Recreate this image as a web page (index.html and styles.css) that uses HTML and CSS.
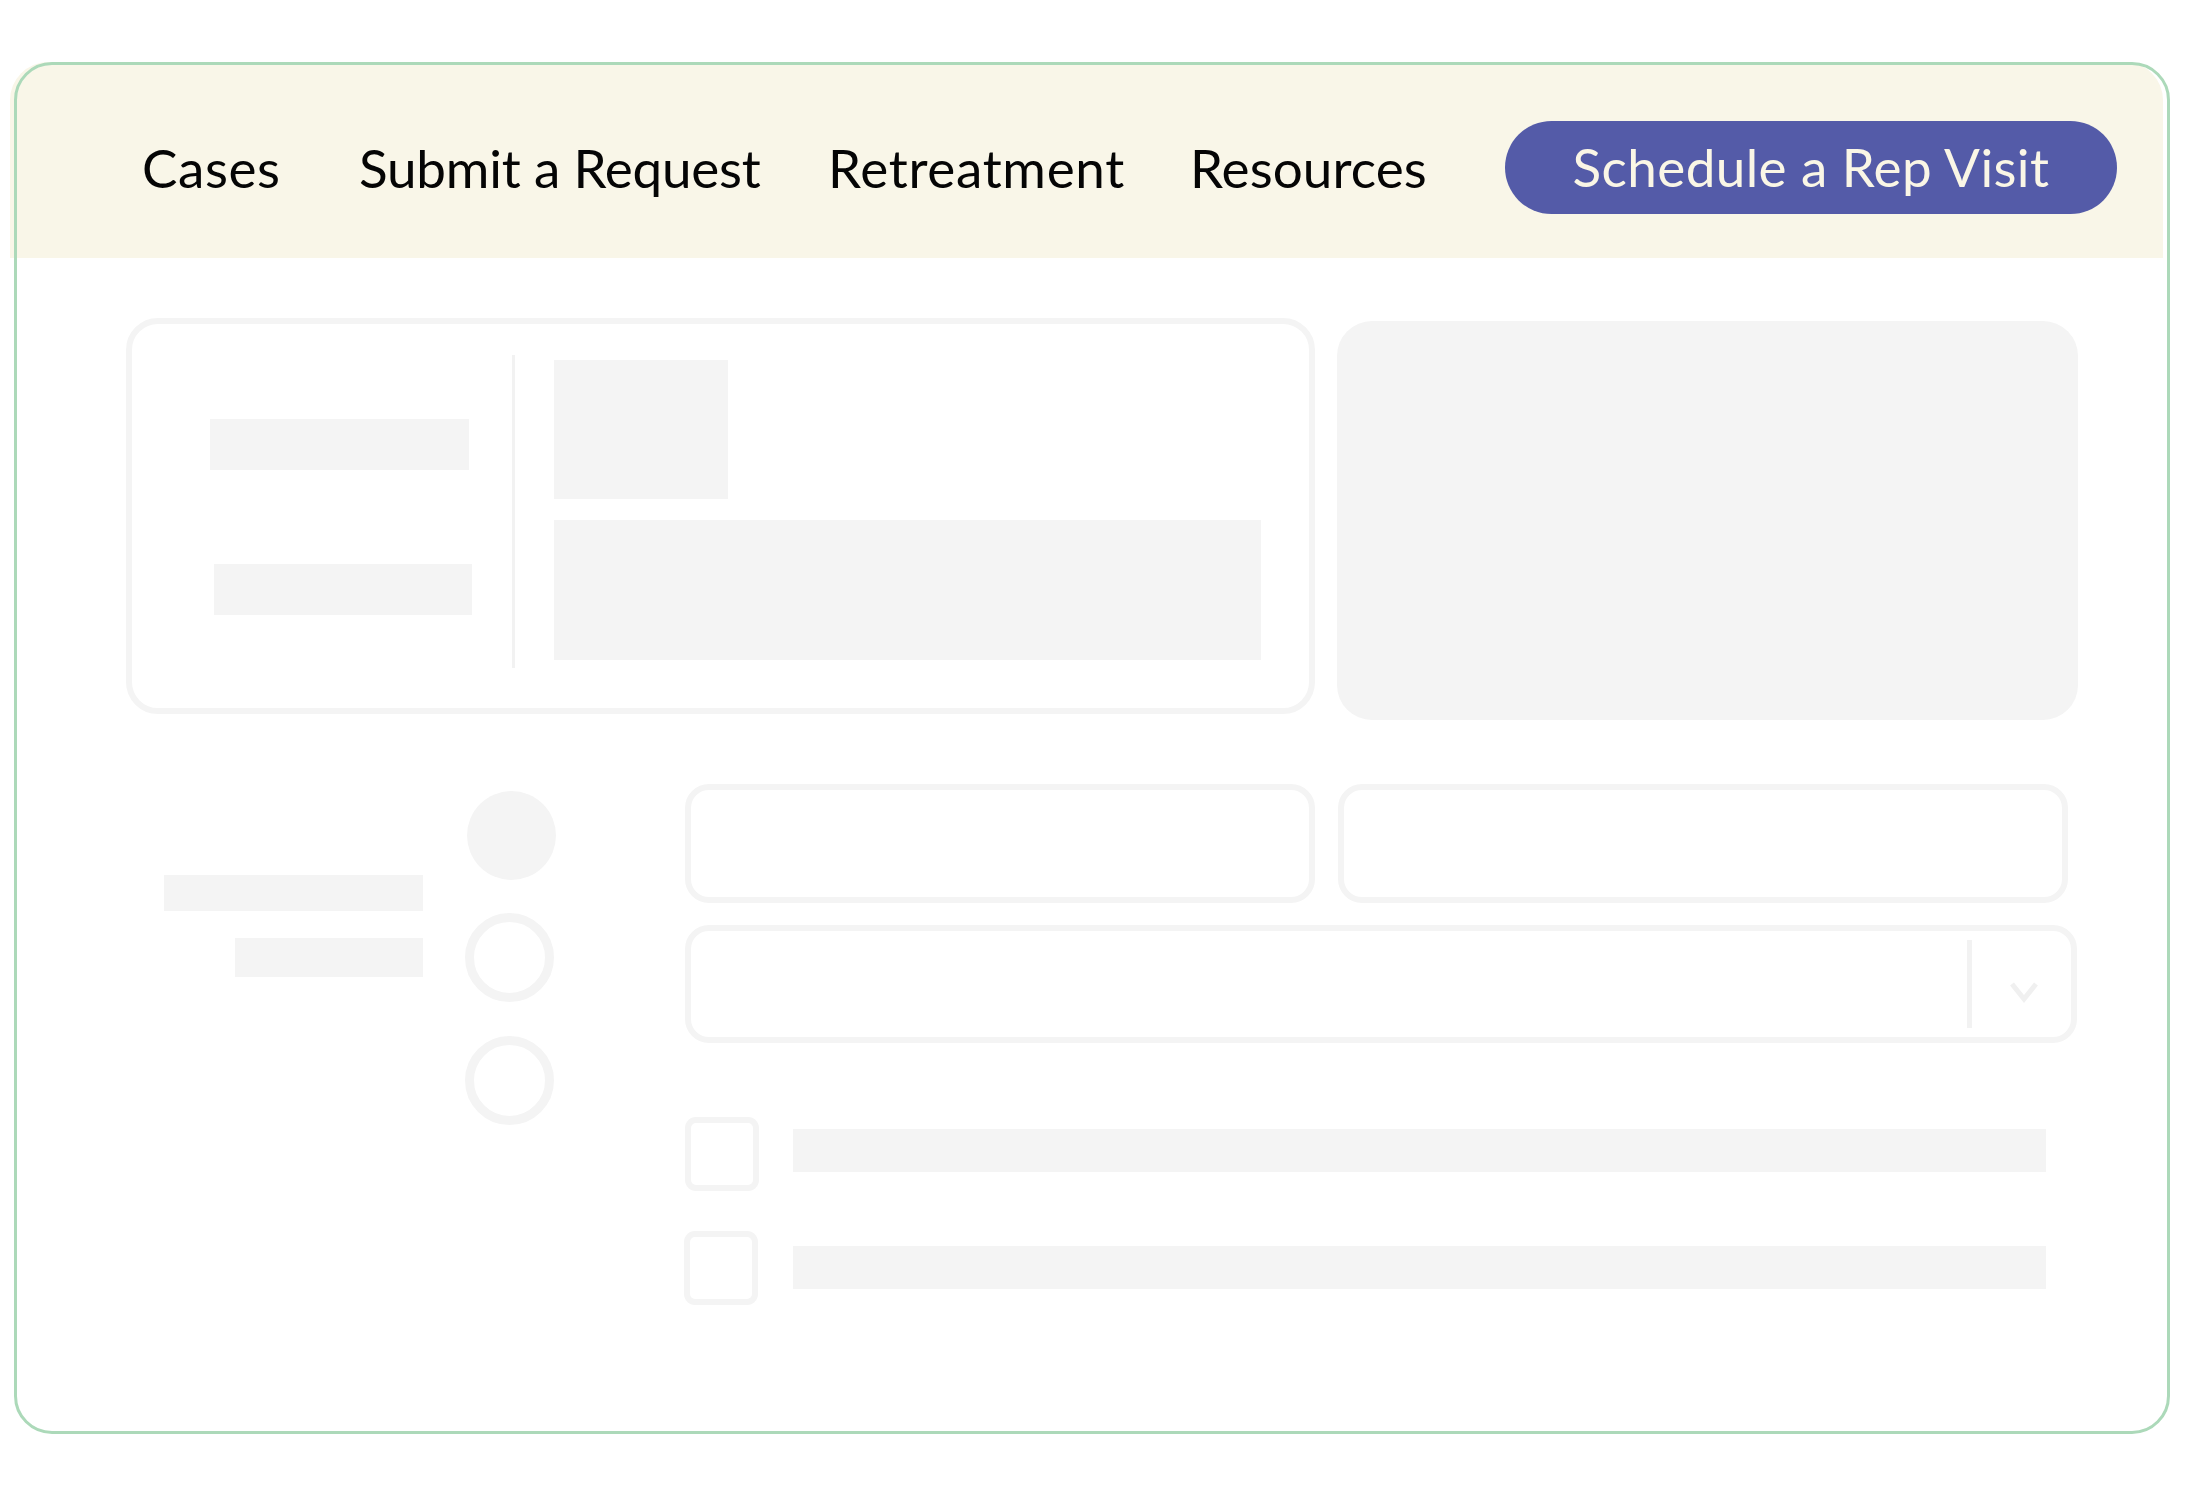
FILE: index.html
```html
<!DOCTYPE html>
<html lang="en">
<head>
<meta charset="utf-8">
<title>Portal wireframe</title>
<link rel="stylesheet" href="styles.css">
</head>
<body>
<div class="frame">
  <header class="topbar">
    <nav class="nav">
      <a class="nav-link nav-cases" href="#">Cases</a>
      <a class="nav-link nav-submit" href="#">Submit a Request</a>
      <a class="nav-link nav-retreat" href="#">Retreatment</a>
      <a class="nav-link nav-resources" href="#">Resources</a>
      <a class="rep-btn" href="#">Schedule a Rep Visit</a>
    </nav>
  </header>
  <main class="main">
    <section class="row-top">
      <div class="card-outline">
        <div class="card-left">
          <div class="ph ph-a"></div>
          <div class="ph ph-b"></div>
        </div>
        <div class="card-divider"></div>
        <div class="card-right">
          <div class="ph ph-c"></div>
          <div class="ph ph-d"></div>
        </div>
      </div>
      <div class="card-fill"></div>
    </section>
    <section class="row-form">
      <div class="labels">
        <div class="ph label-a"></div>
        <div class="ph label-b"></div>
      </div>
      <div class="radios">
        <div class="radio radio-on"></div>
        <div class="radio"></div>
        <div class="radio"></div>
      </div>
      <div class="form">
        <div class="input-row">
          <div class="field field-a"></div>
          <div class="field field-b"></div>
        </div>
        <div class="field select">
          <div class="select-divider"></div>
          <svg class="chev" width="30" height="22" viewBox="0 0 30 22" aria-hidden="true">
            <polyline points="3,3 15,18 27,3" fill="none" stroke="#f0f0f0" stroke-width="5" stroke-linejoin="miter"/>
          </svg>
        </div>
        <div class="checks">
          <div class="check-row">
            <div class="checkbox"></div>
            <div class="ph check-bar"></div>
          </div>
          <div class="check-row check-row-2">
            <div class="checkbox"></div>
            <div class="ph check-bar"></div>
          </div>
        </div>
      </div>
    </section>
  </main>
</div>
</body>
</html>
```
FILE: styles.css
```css
* { box-sizing: border-box; }
html, body { margin: 0; padding: 0; background: #ffffff; }
body {
  font-family: Lato, "Open Sans", "Liberation Sans", sans-serif;
  width: 2192px;
  height: 1490px;
  overflow: hidden;
  padding-top: 66px;
  padding-left: 14px;
}

.frame {
  position: relative;
  width: 2156px;
  height: 1372px;
  border-radius: 38px;
}
.frame::after {
  content: "";
  position: absolute;
  inset: 0;
  border: 3px solid #acd9b9;
  border-radius: 38px;
  pointer-events: none;
}

.topbar {
  margin: -4px 0 0 -4px;
  width: 2153px;
  height: 196px;
  background: #f9f6e8;
  border-radius: 38px 38px 0 0;
  padding: 59px 0 0 132px;
}
.nav {
  display: flex;
  align-items: center;
  height: 93px;
}
.nav-link {
  color: #050505;
  text-decoration: none;
  font-size: 53px;
  line-height: 1;
  white-space: nowrap;
  letter-spacing: 0.7px;
}
.nav-cases { width: 217px; letter-spacing: 0.6px; }
.nav-submit { width: 469px; letter-spacing: -0.2px; }
.nav-retreat { width: 362px; }
.nav-resources { width: 315px; letter-spacing: 0.1px; }
.rep-btn {
  display: flex;
  align-items: center;
  justify-content: center;
  width: 612px;
  height: 93px;
  border-radius: 47px;
  background: #545ba8;
  color: #faf6e6;
  text-decoration: none;
  font-size: 53px;
  line-height: 1;
  white-space: nowrap;
  letter-spacing: 0.4px;
  padding-bottom: 2px;
}

.main {
  padding: 60px 0 0 112px;
}

.ph { background: #f4f4f4; }

.row-top {
  display: flex;
  align-items: flex-start;
  gap: 22px;
}
.card-outline {
  width: 1189px;
  height: 396px;
  border: 6px solid #f4f4f4;
  border-radius: 32px;
  display: flex;
  align-items: flex-start;
}
.card-left {
  margin-left: 78px;
  padding-top: 95px;
  width: 262px;
}
.ph-a { width: 259px; height: 51px; }
.ph-b { width: 258px; height: 51px; margin: 94px 0 0 4px; }
.card-divider {
  margin: 31px 0 0 40px;
  width: 3px;
  height: 313px;
  background: #f2f2f2;
}
.card-right {
  margin: 36px 0 0 39px;
}
.ph-c { width: 174px; height: 139px; }
.ph-d { width: 707px; height: 140px; margin-top: 21px; }
.card-fill {
  margin-top: 3px;
  width: 741px;
  height: 399px;
  border-radius: 35px;
  background: #f4f4f4;
}

.row-form {
  display: flex;
  align-items: flex-start;
  margin-top: 64px;
}
.labels {
  margin-left: 38px;
  width: 259px;
  padding-top: 91px;
  display: flex;
  flex-direction: column;
  align-items: flex-end;
}
.label-a { width: 259px; height: 36px; }
.label-b { width: 188px; height: 39px; margin-top: 27px; }

.radios {
  margin-left: 42px;
  padding-top: 7px;
  display: flex;
  flex-direction: column;
  gap: 34px;
}
.radio {
  width: 89px;
  height: 89px;
  border-radius: 50%;
  border: 9px solid #f4f4f4;
}
.radio-on {
  background: #f4f4f4;
  border: none;
  margin-left: 2px;
  margin-bottom: -1px;
}

.form {
  margin-left: 129px;
  width: 1392px;
}
.input-row {
  display: flex;
  gap: 23px;
}
.field {
  height: 119px;
  border: 6px solid #f4f4f4;
  border-radius: 24px;
}
.field-a { width: 630px; }
.field-b { width: 730px; }
.select {
  margin-top: 22px;
  width: 1392px;
  height: 118px;
  display: flex;
  align-items: flex-start;
}
.select-divider {
  margin: 9px 0 0 1276px;
  width: 5px;
  height: 88px;
  background: #f2f2f2;
}
.chev {
  margin: 50px 0 0 37px;
}

.checks {
  margin-top: 74px;
}
.check-row {
  display: flex;
  align-items: flex-start;
}
.check-row-2 {
  margin-top: 40px;
}
.checkbox {
  width: 74px;
  height: 74px;
  border: 6px solid #f4f4f4;
  border-radius: 11px;
}
.check-bar {
  margin: 12px 0 0 34px;
  width: 1253px;
  height: 43px;
}
.check-row-2 .checkbox { margin-left: -1px; }
.check-row-2 .check-bar { margin-top: 15px; margin-left: 35px; }
```
